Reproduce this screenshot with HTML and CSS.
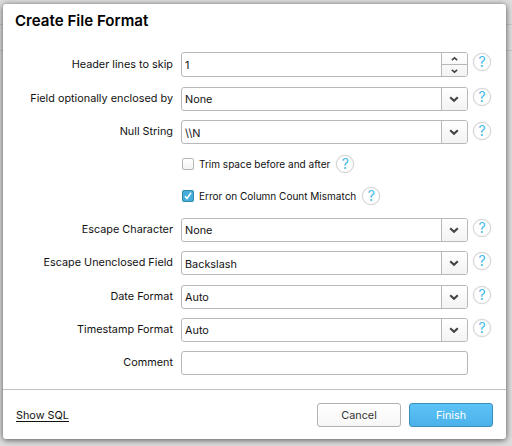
FILE: index.html
```html
<!DOCTYPE html>
<html lang="en">
<head>
<meta charset="utf-8">
<title>Create File Format</title>
<link rel="stylesheet" href="styles.css">
</head>
<body>
<svg class="defs" width="0" height="0" aria-hidden="true">
  <symbol id="down" viewBox="0 0 10 8"><path d="M1.200 2.300 5 5.700 8.800 2.300"/></symbol>
</svg>
<main class="dialog">
  <h1 class="title">Create File Format</h1>
  <form class="form">
    <div class="row tall">
      <label class="label">Header lines to skip</label>
      <div class="field number"><span class="value">1</span>
        <span class="stepper">
          <span class="step"><svg class="mini flip"><use href="#down"/></svg></span>
          <span class="step"><svg class="mini"><use href="#down"/></svg></span>
        </span>
      </div>
      <span class="help high">?</span>
    </div>
    <div class="row">
      <label class="label">Field optionally enclosed by</label>
      <div class="field"><span class="value">None</span><span class="arrow"><svg class="chev"><use href="#down"/></svg></span></div>
      <span class="help">?</span>
    </div>
    <div class="row mid">
      <label class="label">Null String</label>
      <div class="field"><span class="value">\\N</span><span class="arrow"><svg class="chev"><use href="#down"/></svg></span></div>
      <span class="help low">?</span>
    </div>
    <div class="row check-row short">
      <span class="box"></span><label class="check-label">Trim space before and after</label><span class="help inline">?</span>
    </div>
    <div class="row check-row tall">
      <span class="box on"><svg width="12" height="12" viewBox="0 0 12 12"><path d="M3 6.200 5 8.500 9 2.800"/></svg></span><label class="check-label">Error on Column Count Mismatch</label><span class="help inline">?</span>
    </div>
    <div class="row">
      <label class="label">Escape Character</label>
      <div class="field"><span class="value">None</span><span class="arrow"><svg class="chev"><use href="#down"/></svg></span></div>
      <span class="help">?</span>
    </div>
    <div class="row mid">
      <label class="label">Escape Unenclosed Field</label>
      <div class="field"><span class="value">Backslash</span><span class="arrow"><svg class="chev"><use href="#down"/></svg></span></div>
      <span class="help">?</span>
    </div>
    <div class="row">
      <label class="label">Date Format</label>
      <div class="field"><span class="value">Auto</span><span class="arrow"><svg class="chev"><use href="#down"/></svg></span></div>
      <span class="help">?</span>
    </div>
    <div class="row">
      <label class="label">Timestamp Format</label>
      <div class="field"><span class="value">Auto</span><span class="arrow"><svg class="chev"><use href="#down"/></svg></span></div>
      <span class="help">?</span>
    </div>
    <div class="row mid">
      <label class="label">Comment</label>
      <div class="field"></div>
    </div>
  </form>
  <footer class="footer">
    <a class="sql">Show SQL</a>
    <span class="button">Cancel</span>
    <span class="button primary">Finish</span>
  </footer>
</main>
</body>
</html>
```
FILE: styles.css
```css
* { box-sizing: border-box; }
body {
  margin: 0;
  height: 446px;
  padding: 4px 6px 0 3px;
  overflow: hidden;
  background: linear-gradient(#c8c8c8, #c8c8c8) 0 24px / 100% 1px no-repeat,
    linear-gradient(#c8c8c8, #c8c8c8) 0 50px / 100% 1px no-repeat, #dedede;
  font-family: Inter, "Liberation Sans", sans-serif;
  font-size: 10.85px;
  color: #111;
}
.defs { display: block; }
.dialog {
  height: 435px;
  background: #fff;
  border-radius: 3px;
  box-shadow: 0 1px 6px rgba(0, 0, 0, .65);
  display: flex;
  flex-direction: column;
}
.title {
  margin: 0;
  height: 43px;
  padding: 7px 0 0 12px;
  font-size: 15.1px;
  line-height: 19px;
  font-weight: 600;
  color: #000;
}
.form { height: 342px; }
.row { height: 33px; display: flex; align-items: center; }
.row.mid { height: 34px; }
.row.tall { height: 35px; }
.row.short { height: 29px; }
.label {
  width: 170px;
  margin-right: 8px;
  text-align: right;
  white-space: nowrap;
  padding-bottom: 2px;
}
.field {
  width: 287px;
  height: 24px;
  border: 1px solid #b8b8b8;
  border-radius: 3px;
  display: flex;
  align-items: center;
  justify-content: space-between;
  overflow: hidden;
}
.field.number { height: 25px; }
.value { padding-left: 3px; padding-top: 1px; }
.arrow, .stepper {
  width: 26px;
  height: 100%;
  border-left: 1px solid #b8b8b8;
  background: linear-gradient(#fff, #f3f3f3);
}
.arrow { display: flex; align-items: center; justify-content: center; padding-right: 1px; }
.stepper { display: flex; flex-direction: column; }
.step { flex: 1; display: flex; align-items: center; justify-content: center; }
.step + .step { border-top: 1px solid #b8b8b8; }
svg { fill: none; stroke: #444; stroke-width: 2.2; }
.chev { width: 10px; height: 8px; }
.mini { width: 7px; height: 6px; }
.flip { transform: scaleY(-1); }
.help {
  width: 18px;
  height: 18px;
  margin: 0 0 4px 5px;
  border: 1px solid #d4d4d4;
  border-radius: 50%;
  box-shadow: 0 0 1px rgba(0, 0, 0, .25);
  color: #42b9e8;
  font-size: 14px;
  font-weight: 400;
  line-height: 16px;
  text-align: center;
}
.help.high { margin-bottom: 5px; }
.help.low { margin-bottom: 2px; }
.help.inline { margin: 0 0 0 6px; }
.check-row { padding-left: 179px; font-size: 10.02px; }
.box {
  width: 12px;
  height: 12px;
  margin-right: 5px;
  border: 1px solid #b6b6b6;
  border-radius: 2px;
  background: linear-gradient(#fff, #f2f2f2);
}
.box.on { border-color: #3387ad; background: #45aedb; }
.box svg { display: block; margin: -1px; stroke: #fff; stroke-width: 1.5; }
.check-label { white-space: nowrap; }
.footer {
  flex: 1;
  border-top: 1px solid #c2c2c2;
  display: flex;
  align-items: center;
  padding: 1px 13px 0;
}
.sql { margin-right: auto; text-decoration: underline; text-underline-offset: 2px; }
.button {
  width: 84px;
  height: 24px;
  margin-left: 8px;
  border: 1px solid #b2b2b2;
  border-radius: 3px;
  background: linear-gradient(#fff, #f6f6f6);
  color: #333;
  line-height: 22px;
  text-align: center;
}
.button.primary {
  border-color: #3b8fb9;
  background: linear-gradient(#5cc3f8, #4bb1e9);
  color: #fff;
}
```
